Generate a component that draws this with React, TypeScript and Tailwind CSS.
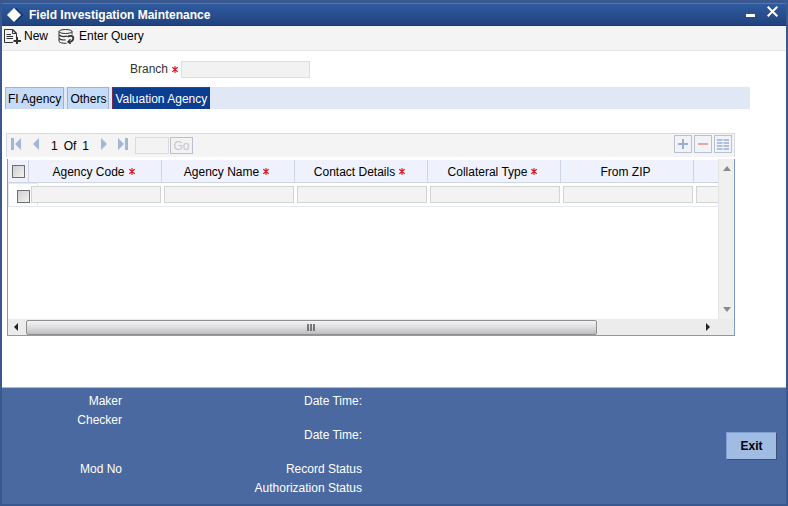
import type { ReactNode } from "react";

const tabs = ["FI Agency", "Others", "Valuation Agency"];

const columns = [
  { title: "Agency Code", required: true },
  { title: "Agency Name", required: true },
  { title: "Contact Details", required: true },
  { title: "Collateral Type", required: true },
  { title: "From ZIP", required: false },
  { title: "", required: false },
];

const Asterisk = () => (
  <svg width="6" height="7" viewBox="0 0 6 7" className="inline-block shrink-0" aria-hidden="true">
    <path d="M3 0v7M0.3 1.2L5.700 5.800M5.700 1.2L0.3 5.800" stroke="#d0141e" strokeWidth="1.1" />
  </svg>
);

const NewIcon = () => (
  <svg width="18" height="15" viewBox="0 0 18 15" fill="none" stroke="#333" aria-hidden="true">
    <path d="M9 13.500H0.500V0.500H8.500V4.500H12.500V9" />
    <path d="M8.500 0.500L12.500 4.500" strokeWidth="1.400" />
    <path d="M2.500 5.500H7M2.500 7.500H9M2.500 9.500H9" />
    <path d="M13 8V15M9.500 12H17" strokeWidth="2" />
  </svg>
);

const QueryIcon = () => (
  <svg width="17" height="15" viewBox="0 0 17 15" fill="none" stroke="#333" aria-hidden="true">
    <ellipse cx="7.500" cy="2.500" rx="6.500" ry="2" />
    <path d="M1 2.500V12.500C2 13.800 5 14.400 8.500 14.300M14 2.500V5.500" />
    <path d="M1 6C2.500 7.500 6 7.800 9 7.200M1 9.500C2.500 11 5 11.200 7.500 10.900" strokeWidth="1.200" />
    <path d="M9.500 8C11 6.300 15.300 6.300 15.300 9C15.300 11.500 13 12.800 10.500 13" strokeWidth="1.800" />
    <path d="M12.500 10.200L9.800 13L12.800 15" strokeWidth="1.200" />
  </svg>
);

const Checkbox = ({ label }: { label: string }) => (
  <input
    type="checkbox"
    aria-label={label}
    className="block size-[13px] shrink-0 appearance-none border border-[#6e6e6e] bg-linear-to-br from-[#cfcfcf] to-[#f2f2f2]"
  />
);

const NavButton = ({ label, path }: { label: string; path: string }) => (
  <button type="button" aria-label={label}>
    <svg width="11" height="12" viewBox="0 0 11 12" fill="#a3b6da">
      <path d={path} />
    </svg>
  </button>
);

const GridButton = ({ label, children }: { label: string; children: ReactNode }) => (
  <button
    type="button"
    aria-label={label}
    className="flex size-[18px] items-center justify-center border border-[#b9c2d0] bg-[#f1f3f8]"
  >
    {children}
  </button>
);

const TitleBar = () => (
  <header className="flex h-[23px] items-center border-t border-b border-t-[#4c78b8] border-b-[#1c3866] bg-linear-to-b from-[#2f5b9f] to-[#21437f] pl-1 pr-2 text-white">
    <svg width="18" height="16" viewBox="0 0 18 16" aria-hidden="true">
      <path d="M10 0.500L17.500 8L10 15.500L8 13.500L13.500 8L8 2.500Z" fill="#123a6b" />
      <path d="M8 1L15 8L8 15L1 8Z" fill="#fff" />
    </svg>
    <h1 className="ml-[5px] flex-1 font-bold">Field Investigation Maintenance</h1>
    <div className="flex items-end gap-3 pb-[6px]">
      <button type="button" aria-label="Minimize">
        <svg width="9" height="3" viewBox="0 0 9 3" className="block">
          <path d="M0 0h9v3H0z" fill="#fff" />
        </svg>
      </button>
      <button type="button" aria-label="Close">
        <svg width="11" height="11" viewBox="0 0 11 11" className="block">
          <path d="M0.700 0.700L10.300 10.300M10.300 0.700L0.700 10.300" stroke="#fff" strokeWidth="2" />
        </svg>
      </button>
    </div>
  </header>
);

const Toolbar = () => (
  <div className="flex h-[25px] items-start gap-2 border-b border-[#e6e6e6] bg-[#f4f4f4] pl-[2px] pt-[2px]">
    <button type="button" className="flex h-4 items-center gap-[2px]">
      <NewIcon />
      New
    </button>
    <button type="button" className="flex h-4 items-center gap-1 pl-[2px]">
      <QueryIcon />
      Enter Query
    </button>
  </div>
);

const Pager = () => (
  <div className="mb-[2px] flex h-6 items-center border border-b-0 border-[#d5dbe6] bg-[#f4f4f4] pl-1 pr-[2px]">
    <div className="flex flex-1 items-center">
      <div className="flex items-center gap-[10px] pb-1">
        <NavButton label="First" path="M0 0h3v12H0zM10 0v12L4 6z" />
        <NavButton label="Previous" path="M7 0v12L1 6z" />
      </div>
      <div className="mx-2 flex gap-[6px]">
        <span>1</span>
        <span>Of</span>
        <span>1</span>
      </div>
      <div className="flex items-center gap-[10px] pb-1">
        <NavButton label="Next" path="M4 0v12l6-6z" />
        <NavButton label="Last" path="M0 0v12l6-6zM7 0h3v12H7z" />
      </div>
      <input
        type="text"
        disabled
        aria-label="Page number"
        className="ml-[6px] h-[17px] w-[34px] border border-[#dcdcdc] bg-[#f3f3f3]"
      />
      <button
        type="button"
        disabled
        className="ml-px flex h-[17px] w-[23px] items-center justify-center border border-[#b9c2d0] bg-[#f2f2f2] text-[#c6c6c6]"
      >
        Go
      </button>
    </div>
    <div className="flex gap-[2px] pb-[3px]">
      <GridButton label="Add row">
        <svg width="10" height="10" viewBox="0 0 10 10">
          <path d="M5 0v10M0 5h10" stroke="#9aafd6" strokeWidth="2" />
        </svg>
      </GridButton>
      <GridButton label="Delete row">
        <svg width="10" height="10" viewBox="0 0 10 10">
          <path d="M0 5h10" stroke="#e9a5a5" strokeWidth="2" />
        </svg>
      </GridButton>
      <GridButton label="Single record view">
        <svg width="12" height="11" viewBox="0 0 12 11">
          <path
            d="M0 1h5.500M6.500 1H12M0 4h5.500M6.500 4H12M0 7h5.500M6.500 7H12M0 10h5.500M6.500 10H12"
            stroke="#9aafd6"
            strokeWidth="1.500"
          />
        </svg>
      </GridButton>
    </div>
  </div>
);

const AgencyTable = () => (
  <div className="h-[160px] min-w-0 flex-1 overflow-hidden pt-px">
    <table className="w-[819px] table-fixed border-separate border-spacing-0">
      <thead>
        <tr className="h-[23px] bg-[#eff2fc]">
          <th className="w-[21px] border-r border-b border-[#ccd5e6] p-0 pl-1">
            <Checkbox label="Select all rows" />
          </th>
          {columns.map(({ title, required }) => (
            <th key={title} className="w-[133px] border-r border-b border-[#ccd5e6] p-0 pt-px pr-[3px] font-normal">
              <span className="flex items-center justify-center gap-1">
                {title}
                {required && <Asterisk />}
              </span>
            </th>
          ))}
        </tr>
      </thead>
      <tbody>
        <tr className="h-6">
          <td className="border-b border-[#e3e8f1] p-0">
            <div className="flex h-[23px] w-[30px] items-center border border-b-0 border-[#e3e8f1] pt-[2px] pl-2">
              <Checkbox label="Select row 1" />
            </div>
          </td>
          {columns.map(({ title }) => (
            <td key={title} className="border-b border-[#e3e8f1] p-0 pl-[2px]">
              <input
                type="text"
                disabled
                aria-label={title || "To ZIP"}
                className="relative block h-[17px] w-[130px] border border-[#d3d3d3] bg-[#f3f3f3]"
              />
            </td>
          ))}
        </tr>
      </tbody>
    </table>
  </div>
);

const VerticalScrollbar = () => (
  <div className="flex w-4 flex-col items-center justify-between border-l border-[#e3e3e3] bg-[#f0f0f0] py-[7px]">
    <svg width="8" height="5" viewBox="0 0 8 5">
      <path d="M4 0l4 5H0z" fill="#8b8b8b" />
    </svg>
    <svg width="8" height="5" viewBox="0 0 8 5">
      <path d="M4 5l4-5H0z" fill="#8b8b8b" />
    </svg>
  </div>
);

const HorizontalScrollbar = () => (
  <div className="flex h-4 items-center bg-[#ececec] pr-6">
    <svg width="18" height="8" viewBox="0 0 18 8">
      <path d="M10 0v8L6 4z" fill="#222" />
    </svg>
    <div className="min-w-0 flex-1">
      <div className="flex h-[15px] w-[84%] items-center justify-center rounded-xs border border-[#8f8f8f] bg-linear-to-b from-[#f4f4f5] via-[#dddde0] to-[#bdbdc2]">
        <svg width="9" height="7" viewBox="0 0 9 7">
          <path d="M1 0v7M4 0v7M7 0v7" stroke="#555" strokeWidth="1.500" />
        </svg>
      </div>
    </div>
    <svg width="4" height="8" viewBox="0 0 4 8">
      <path d="M0 0v8l4-4z" fill="#222" />
    </svg>
  </div>
);

const Footer = () => (
  <footer className="flex border-t border-[#a9bbd8] bg-[#4a69a1] pt-1 pb-[6px] pr-[9px] text-white">
    <dl className="w-[120px] text-right leading-[19px]">
      <dt>Maker</dt>
      <dt>Checker</dt>
      <dt className="mt-[30px]">Mod No</dt>
    </dl>
    <dl className="w-60 text-right leading-[19px]">
      <dt>Date Time:</dt>
      <dt className="mt-[15px]">Date Time:</dt>
      <dt className="mt-[15px]">Record Status</dt>
      <dt>Authorization Status</dt>
    </dl>
    <div className="flex flex-1 items-start justify-end pt-10">
      <button
        type="button"
        className="h-7 w-[51px] border border-t-[#7f9fd0] border-r-[#3b4f70] border-b-[#3b4f70] border-l-[#7f9fd0] bg-[#a1bce3] font-bold text-black"
      >
        Exit
      </button>
    </div>
  </footer>
);

const App = () => {
  return (
    <div className="border-2 border-t-[3px] border-[#3a5890] bg-white font-['Liberation_Sans',Arial,sans-serif] text-[12px] leading-4 text-black">
      <TitleBar />
      <Toolbar />
      <main>
        <div className="flex h-9 items-center pl-32">
          <label htmlFor="branch" className="flex items-center gap-1 text-[#333]">
            Branch <Asterisk />
          </label>
          <input
            id="branch"
            type="text"
            disabled
            className="ml-[3px] h-[17px] w-[129px] border border-[#dedede] bg-[#f2f2f2]"
          />
        </div>

        <nav className="ml-[3px] mr-9 flex h-[22px] gap-[3px] bg-[#e0e8f6]">
          {tabs.map((tab) => (
            <button
              key={tab}
              type="button"
              className={
                tab === "Valuation Agency"
                  ? "border border-b-0 border-t-[#7a2a4a] border-l-[#7a2a4a] border-r-[#0b3d91] bg-[#0b3d91] px-[2px] text-white"
                  : "border border-b-0 border-[#9db3d6] bg-[#c6dbf7] px-[2px]"
              }
            >
              {tab}
            </button>
          ))}
        </nav>

        <section className="mt-6 mr-[51px] mb-[51px] ml-1">
          <Pager />
          <div className="ml-px border border-t-0 border-[#7a9cc6]">
            <div className="flex">
              <AgencyTable />
              <VerticalScrollbar />
            </div>
            <HorizontalScrollbar />
          </div>
        </section>
      </main>
      <Footer />
    </div>
  );
};

export default App;
